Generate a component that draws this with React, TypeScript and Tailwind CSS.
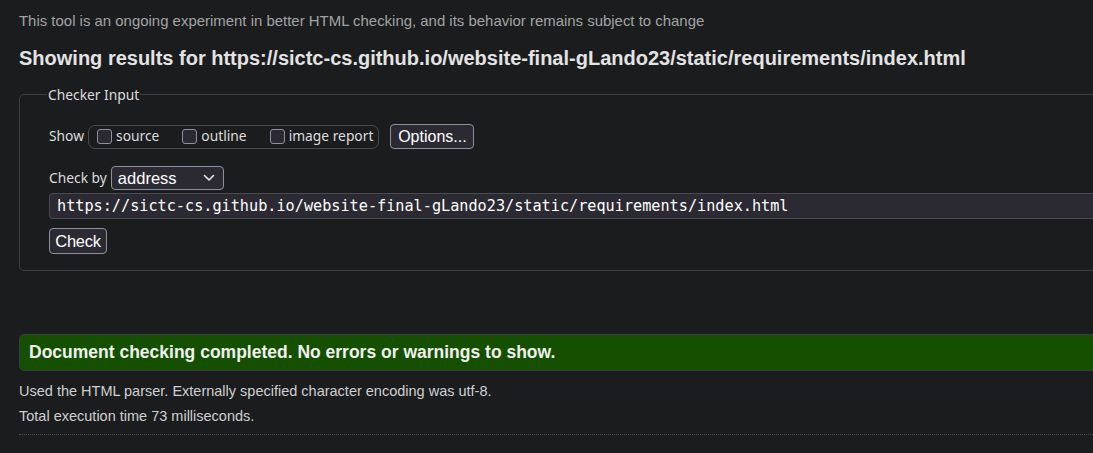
import React from 'react';

const Box: React.FC<{ label: string }> = ({ label }) => (
  <label className="flex items-center gap-[4px]">
    <span className="w-[15px] h-[15px] rounded-[3px] border border-[#8f8f9d] bg-[#2b2a33]" />
    <span>{label}</span>
  </label>
);

const App: React.FC = () => {
  return (
    <div className="w-[1093px] h-[453px] overflow-hidden bg-[#1b1c1e] text-[#e8e6e3] font-['Liberation_Sans',Arial,sans-serif]">
      <div className="pl-[19px]">
        <p className="pt-[12px] text-[14.95px] leading-[18px] text-[#a3a3a3]">
          This tool is an ongoing experiment in better HTML checking, and its behavior remains subject to change
        </p>
        <h2 className="mt-[17px] text-[20px] leading-[22px] font-bold text-[#e3e3e3]">
          Showing results for https://sictc-cs.github.io/website-final-gLando23/static/requirements/index.html
        </h2>

        <fieldset className="mt-[17px] mr-[-20px] h-[185px] rounded-[5px] border border-[#3e4043] pl-[29px] pr-0 font-['Noto_Sans',sans-serif] text-[13.8px] text-[#dcdcdc]">
          <legend className="ml-[-2px] px-[1px] leading-[17px]">Checker Input</legend>

          <div className="mt-[21px] flex items-center h-[25px]">
            <span>Show</span>
            <div className="ml-[4px] flex items-center h-[24px] rounded-[7px] border border-[#4a4b4e] pl-[8px] pr-[5px] gap-[23px]">
              <Box label="source" />
              <Box label="outline" />
              <Box label="image report" />
            </div>
            <button className="ml-[11px] h-[25px] w-[84px] rounded-[4px] border border-[#8f8f9d] bg-[#2b2a33] font-['Liberation_Sans',Arial,sans-serif] text-[16px] text-white">
              Options...
            </button>
          </div>

          <div className="mt-[17px] flex items-center h-[24px]">
            <span>Check by</span>
            <div className="ml-[4px] flex items-center justify-between h-[24px] w-[113px] rounded-[4px] border border-[#8f8f9d] bg-[#2b2a33] pl-[6px] pr-[8px] font-['Liberation_Sans',Arial,sans-serif] text-[16.5px] text-white">
              <span>address</span>
              <svg width="12" height="8" viewBox="0 0 12 8" fill="none">
                <path d="M1.5 1.5 L6 6 L10.5 1.5" stroke="#e8e8e8" strokeWidth="1.6" strokeLinecap="round" strokeLinejoin="round" />
              </svg>
            </div>
          </div>

          <div className="mt-[3px] h-[26px] flex items-center rounded-l-[4px] border-y border-l border-[#4a4b4e] bg-[#2b2a33] pl-[7px] font-['DejaVu_Sans_Mono',monospace] text-[15.2px] text-white">
            https://sictc-cs.github.io/website-final-gLando23/static/requirements/index.html
          </div>

          <button className="mt-[9px] h-[26px] w-[58px] rounded-[4px] border border-[#8f8f9d] bg-[#2b2a33] font-['Liberation_Sans',Arial,sans-serif] text-[16.5px] text-white tracking-[-0.3px]">
            Check
          </button>
        </fieldset>

        <div className="mt-[63px] mr-[-20px] h-[37px] flex items-center rounded-[5px] border border-[#3b3d3f] bg-[#145000] pl-[9px] text-[17.5px] font-bold text-[#f0f0f0]">
          Document checking completed. No errors or warnings to show.
        </div>

        <p className="mt-[11px] text-[14.5px] leading-[18px] text-[#cfcfcf]">
          Used the HTML parser. Externally specified character encoding was utf-8.
        </p>
        <p className="mt-[7px] text-[14.5px] leading-[18px] text-[#cfcfcf]">
          Total execution time 73 milliseconds.
        </p>
        <div className="mt-[9px] border-t border-dotted border-[#4a4b4e]" />
      </div>
    </div>
  );
};

export default App;
